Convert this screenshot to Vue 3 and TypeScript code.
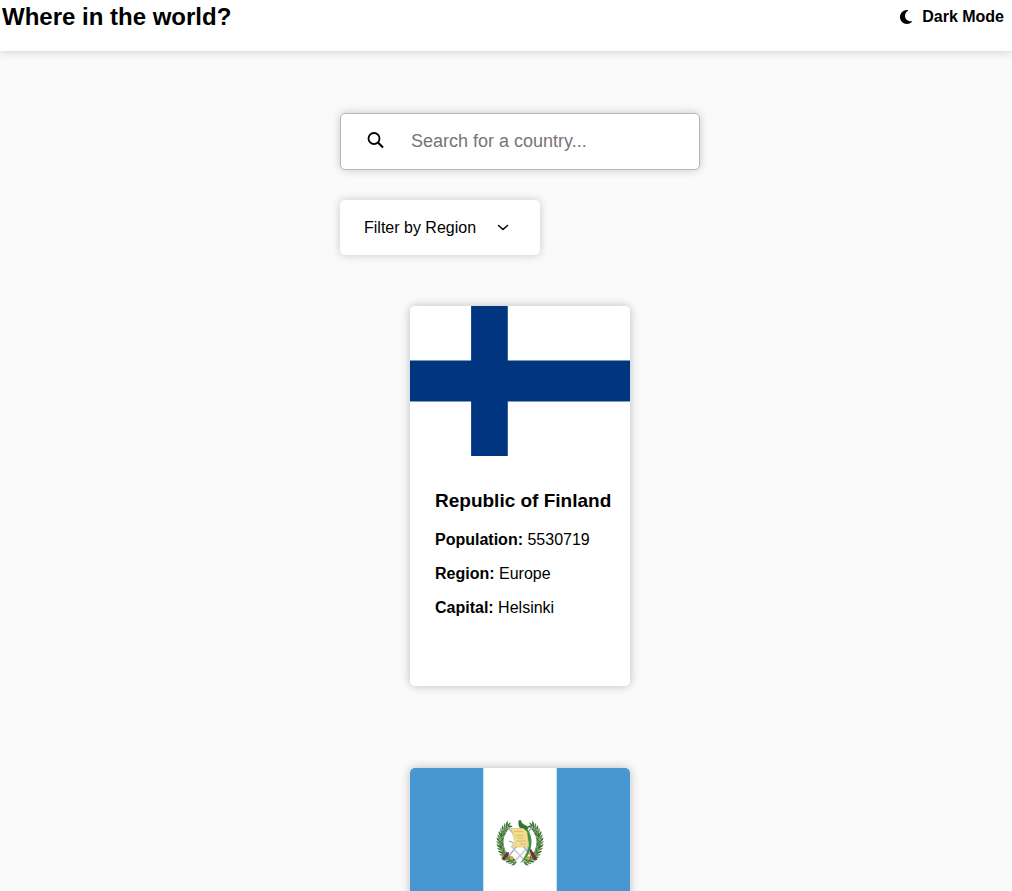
<script setup lang="ts">
import { computed, ref } from 'vue'

interface Details {
  name: string
  population: number
  region: string
  capital: string
}

interface Country {
  code: 'fi' | 'gt'
  details?: Details
}

interface Leaf {
  x: number
  y: number
  angle: number
  color: string
}

const countries = ref<Country[]>([
  { code: 'fi', details: { name: 'Republic of Finland', population: 5530719, region: 'Europe', capital: 'Helsinki' } },
  { code: 'gt' },
])

const regions = ['Africa', 'Americas', 'Asia', 'Europe', 'Oceania']

const search = ref('')
const region = ref('')
const dark = ref(false)

const visible = computed(() => {
  const term = search.value.trim().toLowerCase()
  return countries.value.filter(
    ({ details }) =>
      (!region.value || details?.region === region.value) &&
      (!term || !!details?.name.toLowerCase().includes(term)),
  )
})

/* Leaves of the left laurel branch, from its tip down to the knot. */
const greens = ['#3f7a35', '#5d8f4c', '#2f6b2b', '#7c9a6a']
const leaves: Leaf[] = Array.from({ length: 17 }, (_, i) => {
  const degrees = 226 - i * 7.8
  const t = degrees * (Math.PI / 180)
  const x = 110.5 + Math.cos(t) * 20
  const y = 74 + Math.sin(t) * 21
  const along = degrees + 90
  return [
    { x, y, angle: along - 38, color: greens[i % 4] },
    { x, y, angle: along + 38, color: greens[(i + 2) % 4] },
    { x, y, angle: along, color: greens[(i + 1) % 4] },
  ]
}).flat()
</script>

<template>
  <div class="page" :class="{ dark }">
    <header class="bar">
      <h1>Where in the world?</h1>
      <button type="button" class="mode" @click="dark = !dark">
        <svg viewBox="0 0 384 512" width="12" height="16" aria-hidden="true">
          <path
            d="M223.500 32C100 32 0 132.300 0 256S100 480 223.500 480c60.600 0 115.500-24.200 155.800-63.400c5-4.900 6.300-12.500 3.100-18.700s-10.100-9.700-17-8.500c-9.800 1.700-19.800 2.600-30.100 2.600c-96.900 0-175.500-78.800-175.500-176c0-65.800 36-123.100 89.300-153.300c6.100-3.500 9.200-10.500 7.700-17.300s-7.300-11.900-14.300-12.500c-6.300-.5-12.600-.8-19-.8z"
            fill="currentColor"
          />
        </svg>
        Dark Mode
      </button>
    </header>

    <main>
      <div class="controls">
        <label class="search">
          <svg viewBox="0 0 17 17" width="17" height="17" aria-hidden="true">
            <g fill="none" stroke="currentColor">
              <circle cx="7" cy="6.500" r="5.500" stroke-width="1.800" />
              <path d="M11 10.500 16 15.500" stroke-width="2.200" />
            </g>
          </svg>
          <input v-model="search" type="text" placeholder="Search for a country..." aria-label="Search for a country" />
        </label>

        <div class="filter">
          <select v-model="region" aria-label="Filter by Region">
            <option value="">Filter by Region</option>
            <option v-for="r in regions" :key="r" :value="r">{{ r }}</option>
          </select>
          <svg class="chevron" viewBox="0 0 12 12" width="12" height="12" aria-hidden="true">
            <path d="M1.500 3.500 6 7.500 10.500 3.500" fill="none" stroke="currentColor" stroke-width="1.500" stroke-linecap="round" stroke-linejoin="round" />
          </svg>
        </div>
      </div>

      <article v-for="c in visible" :key="c.code" class="card">
        <svg v-if="c.code === 'fi'" class="flag" viewBox="0 0 18 11" preserveAspectRatio="none" role="img" aria-label="Flag of Finland">
          <rect width="18" height="11" fill="#fff" />
          <path d="M5 0h3v11H5zM0 4h18v3H0z" fill="#003580" />
        </svg>
        <svg v-else class="flag" viewBox="0 0 220 150" preserveAspectRatio="none" role="img" aria-label="Flag of Guatemala">
          <rect width="220" height="150" fill="#4997d0" />
          <rect x="73.300" width="73.400" height="150" fill="#fff" />
          <g id="branch">
            <path
              v-for="(l, i) in leaves"
              :key="i"
              d="M0 0Q3-2.200 6.200 0Q3 1.800 0 0Z"
              :fill="l.color"
              :transform="`translate(${l.x} ${l.y}) rotate(${l.angle})`"
            />
            <g fill="#b9969b">
              <circle cx="93" cy="62" r="1" />
              <circle cx="90" cy="72" r="1" />
              <circle cx="91" cy="83" r="1" />
              <circle cx="96" cy="90" r="1" />
            </g>
          </g>
          <use href="#branch" transform="translate(220 0) scale(-1 1)" />
          <g fill="none" stroke="#a2a6b5" stroke-width="1.200">
            <path d="M97 58 122 89M123 58 98 89M99 73l5 2" />
            <path d="M104 94 119 78M116 94 101 78" stroke="#c3c6d2" />
          </g>
          <path d="M91.500 91 96.500 84.500 99 84 98.500 87.500 94 92.500ZM127.500 91.500 121 81 119 81 121 87 124.500 92.500Z" fill="#70332b" />
          <g fill="#e0a52b">
            <circle cx="101.500" cy="90" r="2" />
            <circle cx="118" cy="90" r="2" />
          </g>
          <path d="M112 57C121 61 124 73 119.500 84C117 90 113 94 110 95C116 88 118.500 81 118.500 75C118 68 115 62 110 58Z" fill="#3f9140" />
          <path d="M108.500 56C107.500 51.500 111 51 111.500 54C113 57 117 57 119 60L116 62C113 62 109 60 108.500 56Z" fill="#2e772f" />
          <path d="M108.500 56 111 59.500 109.500 59.500Z" fill="#a72b32" />
          <path d="M101 60.500H113.500L117 64 118.500 79 103 79 102 76.500 105.500 75.500Z" fill="#f2dc8d" stroke="#d8bb67" stroke-width="0.600" />
          <path d="M104 63.500h9M105.500 67.500h8M108 70h5M107 73h9M110 76h6" stroke="#cfb366" stroke-width="0.700" />
        </svg>

        <div v-if="c.details" class="info">
          <h2>{{ c.details.name }}</h2>
          <p><strong>Population:</strong> {{ c.details.population }}</p>
          <p><strong>Region:</strong> {{ c.details.region }}</p>
          <p><strong>Capital:</strong> {{ c.details.capital }}</p>
        </div>
      </article>
    </main>
  </div>
</template>

<style>
body {
  background: #fafafa;
}
</style>

<style scoped>
.page {
  --surface: #fff;
  --ink: #000;
  min-height: 100vh;
  background: #fafafa;
  color: var(--ink);
  font-family: "Liberation Sans", Arial, sans-serif;
  font-size: 16px;
}

.page.dark {
  --surface: #2b3945;
  --ink: #fff;
  background: #202c37;
}

.bar {
  display: flex;
  justify-content: space-between;
  align-items: flex-start;
  height: 51px;
  padding: 0 8px 0 2px;
  box-sizing: border-box;
  background: var(--surface);
  box-shadow: 0 0 10px rgba(0, 0, 0, 0.2);
}

h1 {
  margin: 3px 0 0;
  font-size: 24px;
  line-height: 28px;
}

.mode {
  display: flex;
  align-items: center;
  gap: 10px;
  margin: 7px 0 0;
  padding: 0;
  border: 0;
  background: none;
  color: inherit;
  font: bold 16px/20px "Liberation Sans", Arial, sans-serif;
  cursor: pointer;
}

main {
  display: flex;
  flex-direction: column;
  align-items: center;
  padding: 62px 0 82px 28px;
}

.controls {
  display: flex;
  flex-direction: column;
  align-items: flex-start;
  gap: 30px;
  width: 360px;
  max-width: 100%;
  margin-bottom: 51px;
}

.search {
  display: flex;
  align-items: center;
  gap: 27px;
  width: 100%;
  height: 57px;
  padding: 0 26px 2px;
  box-sizing: border-box;
  border: 1px solid #b8b8b8;
  border-radius: 5px;
  background: var(--surface);
  box-shadow: 0 0 10px rgba(0, 0, 0, 0.2);
}

.search svg {
  flex: none;
}

.search input {
  flex: 1;
  min-width: 0;
  padding: 0;
  border: 0;
  outline: 0;
  background: none;
  color: inherit;
  font: 18px/24px "Liberation Sans", Arial, sans-serif;
}

.search input::placeholder {
  color: #757575;
}

.filter {
  position: relative;
  width: 200px;
}

.filter select {
  width: 100%;
  height: 55px;
  padding: 0 48px 0 24px;
  appearance: none;
  border: 0;
  border-radius: 5px;
  background: var(--surface);
  color: inherit;
  font: 16px/20px "Liberation Sans", Arial, sans-serif;
  box-shadow: 0 0 10px rgba(0, 0, 0, 0.2);
}

.chevron {
  position: absolute;
  top: 22px;
  right: 31px;
  pointer-events: none;
}

.card {
  width: 220px;
  height: 380px;
  border-radius: 5px;
  overflow: hidden;
  background: var(--surface);
  box-shadow: 0 0 10px rgba(0, 0, 0, 0.25);
}

.card + .card {
  margin-top: 82px;
}

.flag {
  display: block;
  width: 100%;
  height: 150px;
}

.info {
  padding: 34px 0 0 25px;
}

h2 {
  margin: 0 0 19px;
  font-size: 19px;
  line-height: 22px;
}

p {
  margin: 0 0 16px;
  line-height: 18px;
}
</style>
